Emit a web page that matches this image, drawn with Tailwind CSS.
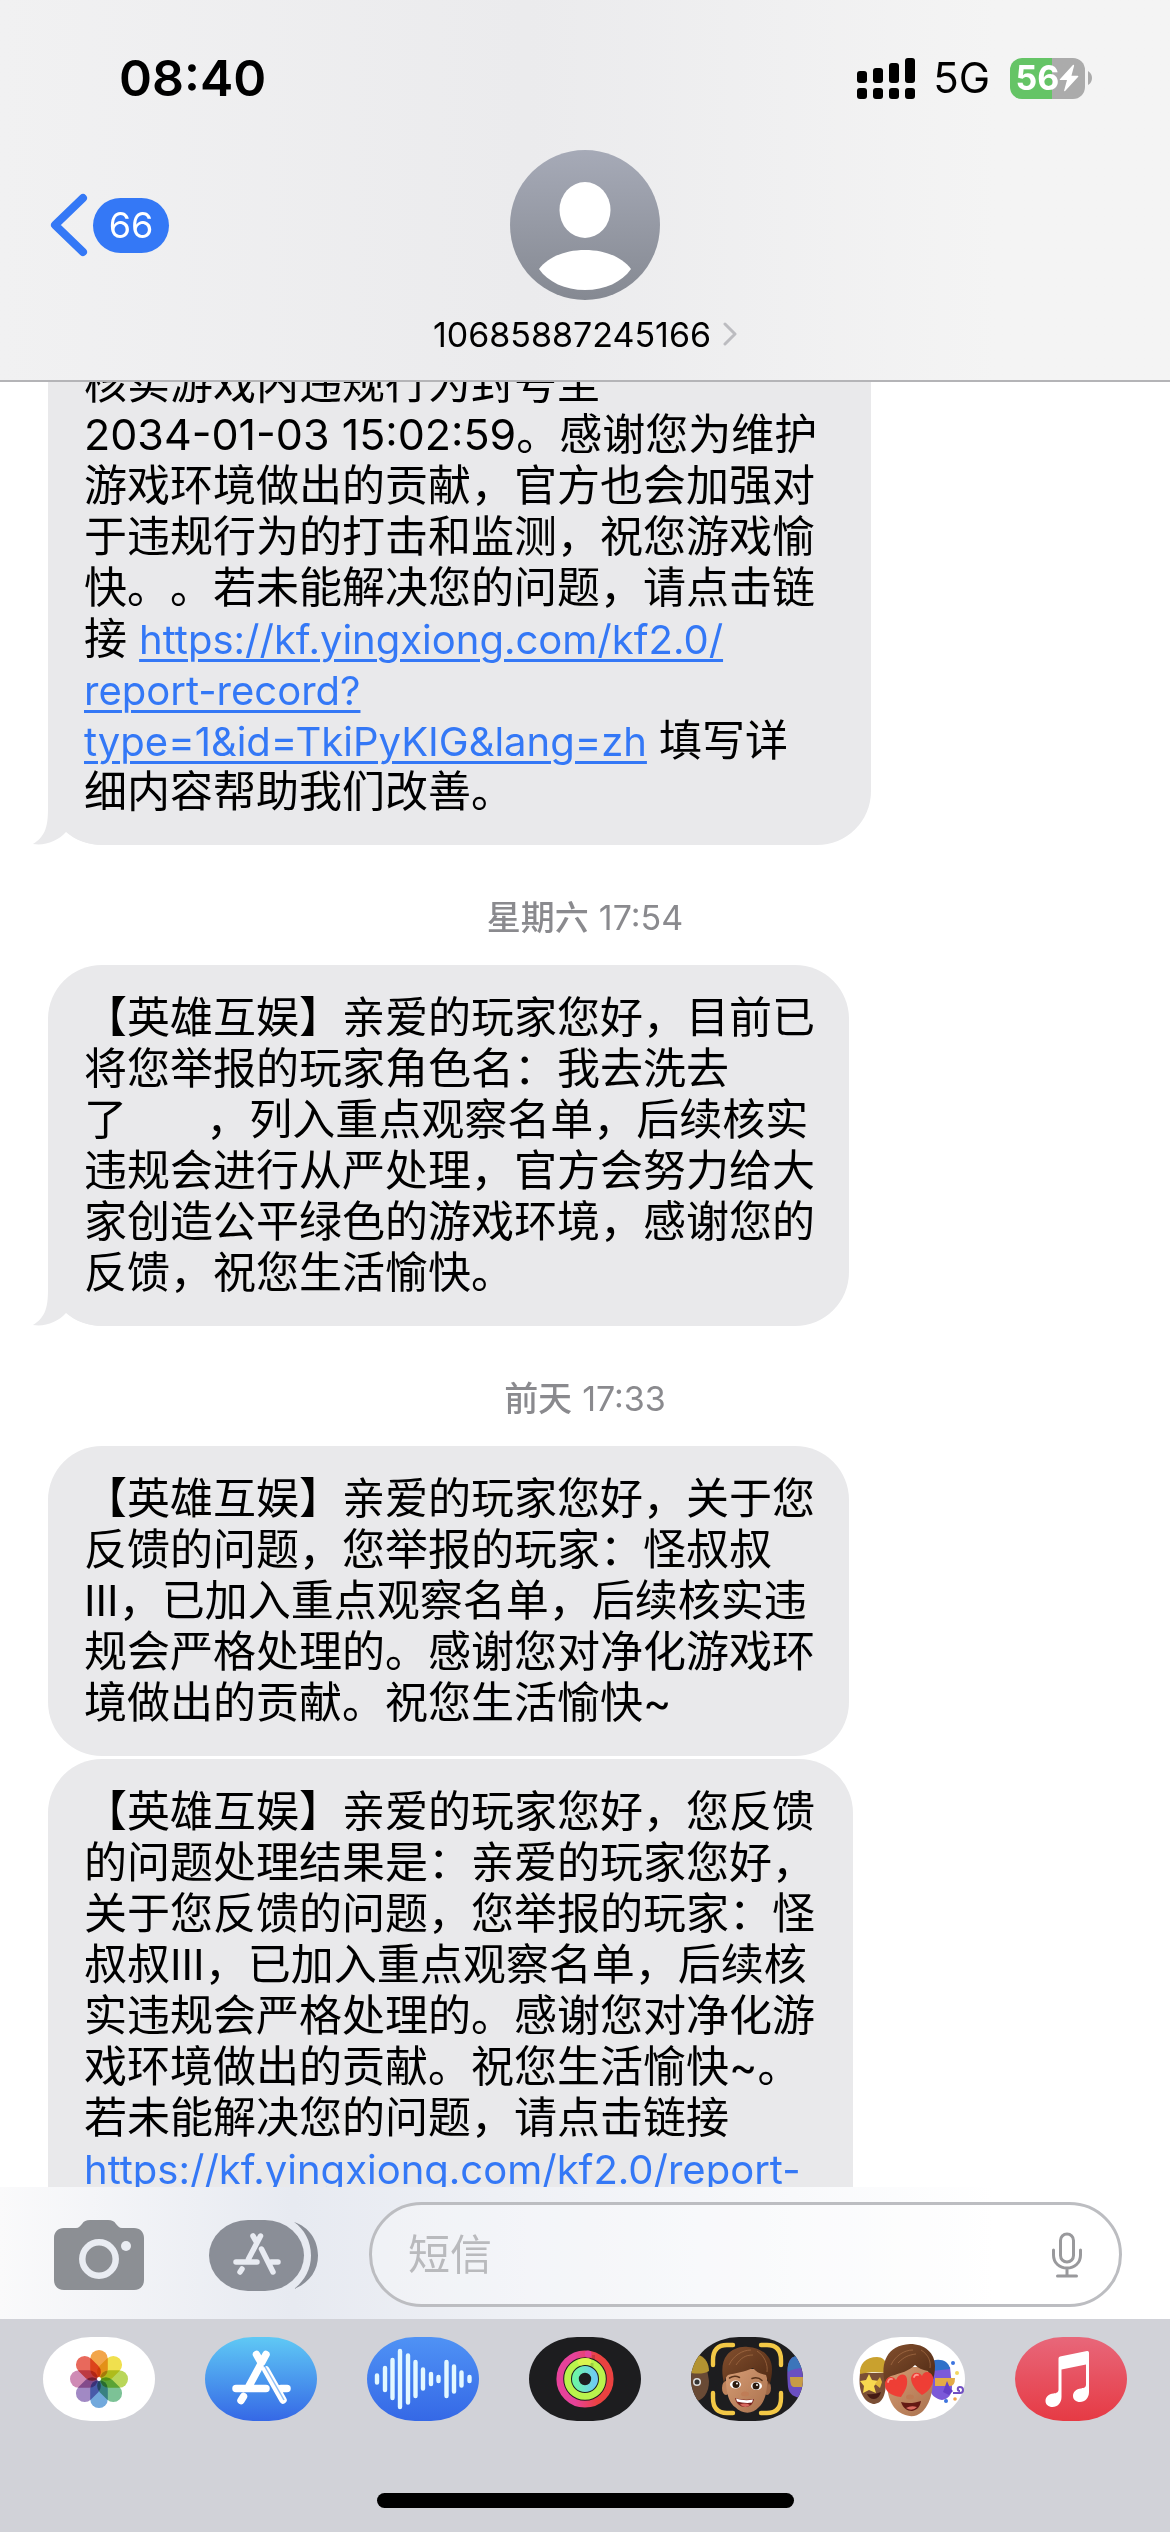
<!DOCTYPE html>
<html lang="zh-CN">

<head>
  <meta charset="UTF-8" />
  <meta name="viewport" content="width=device-width, initial-scale=1.0" />
  <title>短信 - 10685887245166</title>
  <script src="https://cdn.jsdelivr.net/npm/@tailwindcss/browser@4"></script>
</head>

<body class="h-screen flex flex-col overflow-hidden bg-white text-black font-[Inter,'Noto_Sans_CJK_SC',sans-serif] [text-spacing-trim:space-all]">

  <header class="shrink-0 border-b-2 border-[#b4b4b7] bg-linear-to-r from-[#f1f1f2] via-[#ebebed] via-45% to-[#f4f4f4] to-85%">
    <!-- Status bar -->
    <div class="h-[150px] pt-1.5 pl-[119px] pr-[78px] flex items-center justify-between">
      <span class="text-[50px] leading-none font-semibold">08:40</span>
      <div class="flex items-center">
        <svg class="w-[58px] h-[41px]" viewBox="0 0 58 41">
          <rect x="0" y="13" width="10" height="12" rx="3" />
          <rect x="16" y="10" width="10" height="15" rx="3" />
          <rect x="32" y="5" width="10" height="20" rx="3" />
          <rect x="48" y="0" width="10" height="25" rx="3" />
          <rect x="0" y="30" width="10" height="11" rx="3" />
          <rect x="16" y="30" width="10" height="11" rx="3" />
          <rect x="32" y="30" width="10" height="11" rx="3" />
          <rect x="48" y="30" width="10" height="11" rx="3" />
        </svg>
        <span class="ml-[18px] mr-5 text-[42px] leading-none">5G</span>
        <div class="w-[75px] h-[41px] rounded-xl bg-linear-to-r from-[#65c466] from-56% to-[#ababab] to-56% flex items-center justify-center text-white">
          <span class="text-[34px] leading-none font-bold">56</span>
          <svg class="w-5 h-7" viewBox="0 0 18 28" preserveAspectRatio="none">
            <path d="M12.500 1L.8 15.200q-.5.9.6.9h5.800L4.600 26.500q-.1 1.100.9.6L17.300 12.700q.5-.9-.6-.9h-5.500L13.600 1.700Q13.600.2 12.500 1z" fill="#fff" />
          </svg>
        </div>
        <svg class="ml-[3px] w-1 h-3.5" viewBox="0 0 4 14"><path d="M0 0q4 2.500 4 7t-4 7z" fill="#ababab" /></svg>
      </div>
    </div>

    <!-- Contact -->
    <div class="grid grid-cols-3 items-start pb-[22px]">
      <a href="#" class="h-[150px] pl-12 flex items-center gap-1">
        <svg class="w-[41px] h-[64px]" viewBox="0 0 41 64" fill="none" stroke="#3478f6" stroke-width="8" stroke-linecap="round" stroke-linejoin="round"><path d="M35 5L7 32l28 27" /></svg>
        <span class="w-[76px] h-[55px] rounded-full bg-[#3478f6] text-white text-[36px] flex items-center justify-center">66</span>
      </a>
      <button class="flex flex-col items-center">
        <svg class="w-[150px] h-[150px]" viewBox="0 0 150 150">
          <defs>
            <linearGradient id="avatar" x1="0" y1="0" x2="0" y2="1"><stop offset="0" stop-color="#a6aab7" /><stop offset="1" stop-color="#858992" /></linearGradient>
          </defs>
          <circle cx="75" cy="75" r="75" fill="url(#avatar)" />
          <ellipse cx="75" cy="60" rx="25.500" ry="28" fill="#fff" />
          <path d="M29 119C38 107 55 100 75 100s37 7 46 19c-9 13-26 21-46 21s-37-8-46-21z" fill="#fff" />
        </svg>
        <span class="mt-2.5 h-12 flex items-center gap-3 text-[34px] whitespace-nowrap">10685887245166
          <svg class="w-3.5 h-6" viewBox="0 0 14 24" fill="none" stroke="#bcbcc0" stroke-width="3" stroke-linecap="round" stroke-linejoin="round"><path d="M2 2l10 10L2 22" /></svg>
        </span>
      </button>
    </div>
  </header>

  <!-- Messages -->
  <main class="flex-1 min-h-0 overflow-hidden pl-12 text-[43px] leading-[51px] whitespace-nowrap">
    <div class="relative -mt-6 w-[823px] pl-9 pb-7 rounded-b-[54px] bg-[#e9e9eb]">
      <svg class="absolute bottom-0 -left-4 w-[72px] h-[54px]" viewBox="0 0 72 54"><path d="M16 0v18c0 20-4 28-15 35 12 2 25-3 33-12 9 8 22 13 38 13V0z" fill="#e9e9eb" /></svg>
      <p class="relative">核实游戏内违规行为封号至<br>2034-01-03 15:02:59。感谢您为维护<br>游戏环境做出的贡献，官方也会加强对<br>于违规行为的打击和监测，祝您游戏愉<br>快。。若未能解决您的问题，请点击链<br>接 <a href="#" class="text-[40px] leading-none text-[#3478f6] underline decoration-3 underline-offset-5">https://kf.yingxiong.com/kf2.0/<br>report-record?<br>type=1&amp;id=TkiPyKIG&amp;lang=zh</a> 填写详<br>细内容帮助我们改善。</p>
    </div>

    <p class="h-[120px] pt-6 pr-12 flex items-center justify-center gap-2.5 text-[34px] text-[#8a8a8e]"><b class="font-medium">星期六</b>17:54</p>

    <div class="relative w-[801px] pl-9 pt-[27px] pb-7 rounded-[54px] bg-[#e9e9eb]">
      <svg class="absolute bottom-0 -left-4 w-[72px] h-[54px]" viewBox="0 0 72 54"><path d="M16 0v18c0 20-4 28-15 35 12 2 25-3 33-12 9 8 22 13 38 13V0z" fill="#e9e9eb" /></svg>
      <p class="relative">【英雄互娱】亲爱的玩家您好，目前已<br>将您举报的玩家角色名：我去洗去<br>了　&nbsp;&nbsp;&nbsp;，列入重点观察名单，后续核实<br>违规会进行从严处理，官方会努力给大<br>家创造公平绿色的游戏环境，感谢您的<br>反馈，祝您生活愉快。</p>
    </div>

    <p class="h-[120px] pt-6 pr-12 flex items-center justify-center gap-2.5 text-[34px] text-[#8a8a8e]"><b class="font-medium">前天</b>17:33</p>

    <div class="w-[801px] pl-9 pt-[27px] pb-7 rounded-[54px] bg-[#e9e9eb]">
      <p>【英雄互娱】亲爱的玩家您好，关于您<br>反馈的问题，您举报的玩家：怪叔叔<br>III，已加入重点观察名单，后续核实违<br>规会严格处理的。感谢您对净化游戏环<br>境做出的贡献。祝您生活愉快~</p>
    </div>

    <div class="mt-[3px] w-[805px] pl-9 pt-[27px] pb-7 rounded-t-[54px] bg-[#e9e9eb]">
      <p>【英雄互娱】亲爱的玩家您好，您反馈<br>的问题处理结果是：亲爱的玩家您好，<br>关于您反馈的问题，您举报的玩家：怪<br>叔叔III，已加入重点观察名单，后续核<br>实违规会严格处理的。感谢您对净化游<br>戏环境做出的贡献。祝您生活愉快~。<br>若未能解决您的问题，请点击链接<br><a href="#" class="text-[40px] leading-none text-[#3478f6] underline decoration-3 underline-offset-5">https://kf.yingxiong.com/kf2.0/report-</a></p>
    </div>
  </main>

  <!-- Compose bar -->
  <form class="shrink-0 h-[132px] pt-[15px] pl-[54px] pr-12 flex items-start bg-linear-to-r from-[#fafafb] via-[#e7eaf1] via-25% to-white to-85%">
    <button type="button" aria-label="相机" class="mt-[18px]">
      <svg class="w-[90px] h-[70px]" viewBox="0 0 90 70">
        <path d="M10 8h12c3 0 4-2 6-4 2-3 4-4 8-4h18c4 0 6 1 8 4 2 2 3 4 6 4h12c6 0 10 4 10 10v42c0 6-4 10-10 10H10C4 70 0 66 0 60V18C0 12 4 8 10 8z" fill="#8c8f94" />
        <circle cx="45" cy="39" r="16.700" fill="none" stroke="#e9ecf2" stroke-width="6.500" />
        <circle cx="72" cy="26" r="5" fill="#e9ecf2" />
      </svg>
    </button>
    <button type="button" aria-label="App" class="mt-[18px] ml-[65px]">
      <svg class="w-[110px] h-[71px]" viewBox="0 0 110 71">
        <rect width="95" height="71" rx="39" ry="35.500" fill="#8a8e97" />
        <path d="M85 2c15 5 24 18 24 33.500S100 63 85 69c10-8 17-19 17-33.500S95 9 85 2z" fill="#8a8e97" />
        <path d="M51.500 16L39.500 39M44 16l3.500 6M52.500 29L64 52M27 42h21M62 42h7M33 49l-2 3" fill="none" stroke="#e8ebf2" stroke-width="5.500" stroke-linecap="round" />
      </svg>
    </button>
    <div class="ml-[50px] flex-1 min-w-0 h-[105px] border-3 border-[#bcbdc1] rounded-full bg-white/30 pl-9 pr-9 flex items-center">
      <input type="text" aria-label="短信" placeholder="短信" class="flex-1 min-w-0 bg-transparent text-[42px] outline-none placeholder:text-[#b9babd]" />
      <button type="button" aria-label="语音输入" class="shrink-0">
        <svg class="w-8 h-[46px]" viewBox="0 0 32 46" fill="none" stroke="#99999c" stroke-width="3" stroke-linecap="round" stroke-linejoin="round">
          <rect x="9.500" y="2" width="13" height="28" rx="6.500" />
          <path d="M2.500 18v5c0 8 6 13 13.500 13s13.500-5 13.500-13v-5M16 36v8M6.500 44h19" />
        </svg>
      </button>
    </div>
  </form>

  <!-- App strip -->
  <footer class="shrink-0 h-[213px] pt-[18px] pb-6 bg-[#d1d2d8] flex flex-col justify-between items-center">
    <nav class="w-full px-[43px] flex justify-between">
      <button aria-label="照片">
        <svg class="w-[112px] h-[84px]" viewBox="0 0 112 84">
          <rect width="112" height="84" rx="48" ry="42" fill="#fff" />
          <g class="isolate" transform="translate(56 42)">
            <rect class="mix-blend-multiply" x="-8.800" y="-29" width="17.600" height="28" rx="8.800" fill="#f2a54a" />
            <rect class="mix-blend-multiply" x="-8.800" y="-29" width="17.600" height="28" rx="8.800" fill="#f0e04e" transform="rotate(45)" />
            <rect class="mix-blend-multiply" x="-8.800" y="-29" width="17.600" height="28" rx="8.800" fill="#b9d65a" transform="rotate(90)" />
            <rect class="mix-blend-multiply" x="-8.800" y="-29" width="17.600" height="28" rx="8.800" fill="#7cc296" transform="rotate(135)" />
            <rect class="mix-blend-multiply" x="-8.800" y="-29" width="17.600" height="28" rx="8.800" fill="#72a9dc" transform="rotate(180)" />
            <rect class="mix-blend-multiply" x="-8.800" y="-29" width="17.600" height="28" rx="8.800" fill="#a189c4" transform="rotate(225)" />
            <rect class="mix-blend-multiply" x="-8.800" y="-29" width="17.600" height="28" rx="8.800" fill="#cf8bb5" transform="rotate(270)" />
            <rect class="mix-blend-multiply" x="-8.800" y="-29" width="17.600" height="28" rx="8.800" fill="#e8695c" transform="rotate(315)" />
            <circle r="2" fill="#fff" />
          </g>
        </svg>
      </button>
      <button aria-label="App Store">
        <svg class="w-[112px] h-[84px]" viewBox="0 0 112 84">
          <defs><linearGradient id="store" x1="0" y1="0" x2="0" y2="1"><stop offset="0" stop-color="#5fc9f5" /><stop offset="1" stop-color="#3568e6" /></linearGradient></defs>
          <rect width="112" height="84" rx="48" ry="42" fill="url(#store)" />
          <path d="M61 17.500L43.500 50M51.500 17.500l4 7M61 33l17 30M31 51.500h30M76 51.500h6M38.500 59.500l-2.500 4" fill="none" stroke="#fff" stroke-width="7.500" stroke-linecap="round" />
          <path d="M59 28l20 35" stroke="#4593ee" stroke-width="1.500" fill="none" opacity=".6" />
        </svg>
      </button>
      <button aria-label="音频">
        <svg class="w-[112px] h-[84px]" viewBox="0 0 112 84">
          <defs><linearGradient id="audio" x1="0" y1="0" x2="0" y2="1"><stop offset="0" stop-color="#4f92f5" /><stop offset="1" stop-color="#3568e6" /></linearGradient></defs>
          <rect width="112" height="84" rx="48" ry="42" fill="url(#audio)" />
          <path d="M10 38.500v7M18 31v22M25.500 23v38M33 14v56M41 18.500v47M48.500 25v34M56 32.500v19M64 37v10M71.500 40v4M79.500 25v34M87 29.500v25M94.500 35.500v13M102.500 40v4" stroke="#e3f8ff" stroke-width="4.400" stroke-linecap="round" />
        </svg>
      </button>
      <button aria-label="健身">
        <svg class="w-[112px] h-[84px]" viewBox="0 0 112 84">
          <defs>
            <linearGradient id="move" x1="0" x2="1"><stop offset=".3" stop-color="#e6429a" /><stop offset=".75" stop-color="#ea4240" /></linearGradient>
            <linearGradient id="stand" x1="0" x2="1"><stop offset="0" stop-color="#6df5a6" /><stop offset="1" stop-color="#6fcdf2" /></linearGradient>
          </defs>
          <rect width="112" height="84" rx="48" ry="42" fill="#1d1d1f" />
          <g fill="none" stroke-width="6.800">
            <circle cx="56" cy="42" r="25.200" stroke="url(#move)" />
            <circle cx="56" cy="42" r="17.400" stroke="#b9f34c" />
            <circle cx="56" cy="42" r="9.600" stroke="url(#stand)" />
            <path d="M59 17v.1" stroke="#e6429a" stroke-linecap="round" />
            <path d="M52 25q3-1 7-.5" stroke="#dcf54f" stroke-linecap="round" />
            <path d="M64.500 18v5M63 26v4" stroke="#000" stroke-opacity=".15" stroke-width="3" />
          </g>
        </svg>
      </button>
      <button aria-label="拟我表情">
        <svg class="w-[112px] h-[84px]" viewBox="0 0 112 84">
          <defs>
            <clipPath id="pill"><rect width="112" height="84" rx="48" ry="42" /></clipPath>
            <linearGradient id="skin" x1="0" y1="0" x2="1" y2="1"><stop offset="0" stop-color="#d69c74" /><stop offset="1" stop-color="#a9714d" /></linearGradient>
            <linearGradient id="hair" x1="0" y1="0" x2="1" y2="1"><stop offset="0" stop-color="#84502e" /><stop offset="1" stop-color="#4e2914" /></linearGradient>
          </defs>
          <g clip-path="url(#pill)">
            <rect width="112" height="84" fill="#1d1d1f" />
            <!-- left and right neighbours -->
            <path d="M0 32h16l2 12c0 12-6 20-14 20H0z" fill="#694a35" />
            <path d="M0 36V22l8-4c7 3 10 9 10 16-5 3-11 3-18 2z" fill="#b39331" />
            <circle cx="6" cy="45" r="4" fill="#ddd" /><circle cx="6" cy="45" r="2.500" fill="#333" />
            <path d="M112 20h-10c-7 4-6 18-5 30 1 7 6 11 15 11z" fill="#6a4fc0" />
            <path d="M112 19h-8c-6 3-8 9-7 16 5-3 9-4 15-4z" fill="#3c75ba" />
            <path d="M99 40h13v10h-9c-3 0-4-4-4-10z" fill="#c79c45" />
            <!-- face -->
            <ellipse cx="35" cy="51" rx="4" ry="7" fill="#bd835d" /><ellipse cx="76" cy="51" rx="4" ry="7" fill="#a06947" />
            <path d="M35 32c-1 24 3 33 9 38 7 7 17 8 24 0 7-7 9-17 8-38z" fill="url(#skin)" />
            <path d="M33 46c-3-12-2-22 3-28 5-6 13-9 21-8 15 1 24 10 24 22 0 6-1 12-3 16l-3-10c-6-1-10-3-13-7-8 4-18 5-25 7-2 2-3 4-4 8z" fill="url(#hair)" />
            <path d="M38 28c4-9 13-15 22-15M45 28c5-7 9-10 17-10M66 14c8 5 11 14 10 21" fill="none" stroke="#b0764c" stroke-width="1" opacity=".6" />
            <ellipse cx="44.500" cy="47.500" rx="5.500" ry="4" fill="#fff" /><ellipse cx="65.500" cy="49" rx="5.500" ry="4" fill="#fff" />
            <circle cx="45" cy="47.500" r="3.500" fill="#2b190d" /><circle cx="65" cy="49" r="3.500" fill="#2b190d" />
            <circle cx="46" cy="46.500" r="1" fill="#fff" /><circle cx="66" cy="48" r="1" fill="#fff" />
            <path d="M38.500 41q5-3 10-.5M61 41.500q6-2 10 2" fill="none" stroke="#5a331b" stroke-width="1.500" stroke-linecap="round" />
            <ellipse cx="54" cy="57" rx="4" ry="2.500" fill="#bf7d57" />
            <path d="M44 61c6 2 13 2 19 1-1 6-5 8-9 8s-9-3-10-9z" fill="#7c231e" />
            <path d="M45 61.500c6 2 12 2 17 1l-1 3c-5 1-11 0-15-1z" fill="#fff" />
            <path d="M49 67.500q5-2 10 .5-5 4-10-.5z" fill="#d7695f" />
          </g>
          <path d="M22 28v-5q0-15 14-15h6M70 8h6q14 0 14 15v5M22 56v5q0 15 14 15h6M70 76h6q14 0 14-15v-5" fill="none" stroke="#f3c846" stroke-width="4.400" stroke-linecap="round" />
        </svg>
      </button>
      <button aria-label="拟我表情贴纸">
        <svg class="w-[112px] h-[84px]" viewBox="0 0 112 84">
          <rect width="112" height="84" rx="48" ry="42" fill="#fff" />
          <!-- yellow beanie -->
          <path d="M7 36c-2 16 2 28 13 31 9 0 14-8 13-31z" fill="#7b4f35" />
          <path d="M7 37c-1-10 6-17 17-17 5 0 9 3 9 8v8c-9-1-17-1-26 1z" fill="#c9a12e" />
          <path d="M16 37l3 6 7 1-5 5 2 7-7-3-6 3 1-7-4-5 6-1z" fill="#f7d84f" /><path d="M27 40l2 5-2 6-5-4z" fill="#e3b93b" />
          <path d="M14 57q7 1 14-2-2 7-7 7t-7-5z" fill="#451b13" />
          <!-- purple party face -->
          <path d="M79 30h18l2 20c0 8-4 12-10 13-7-1-12-6-12-12z" fill="#7b59d8" />
          <path d="M79 24c8-3 17 0 18 8l-18 2z" fill="#3071c9" />
          <path d="M82 41h20q0 9-6 8H82z" fill="#e3ab47" />
          <path d="M94 44l3 7 3 3-4 4-6-3z" fill="#6541c7" />
          <path d="M100 56h7c4 0 4-6 0-6-3 0-3 4 0 4" fill="none" stroke="#714fc2" stroke-width="2" />
          <circle cx="100" cy="26" r="2" fill="#3d74df" /><circle cx="104" cy="36" r="2" fill="#f3d660" /><circle cx="93" cy="64" r="2" fill="#3d74df" /><circle cx="102" cy="62" r="1.800" fill="#f0a04a" />
          <!-- heart eyes -->
          <path d="M33 30c0 28 4 38 13 45 8 5 16 6 23 0 8-8 12-20 11-45z" fill="url(#skin)" />
          <path d="M32 46c-5-20 2-38 25-39 15 0 25 9 25 22 0 6-1 12-3 16l-4-11c-6-1-10-3-13-6-6 6-14 8-24 11-3 1-4 3-6 7z" fill="url(#hair)" />
          <path d="M38 28c4-9 13-15 22-15M45 26c6-6 10-8 18-9M68 13c8 5 10 12 9 18" fill="none" stroke="#b0764c" stroke-width="1" opacity=".6" />
          <path d="M48 60c-10-1-17-6-16-14 1-7 8-8 11-3 3-7 10-7 11-1 1 7-2 12-6 18z" fill="#ee3e35" />
          <path d="M69 58c-6-4-11-11-11-17 1-6 8-7 11-2 2-6 9-5 11 1 1 8-4 14-11 18z" fill="#ee3e35" />
          <path d="M35 45q1-4 4-3M61 40q1-3 4-2" fill="none" stroke="#ff9c90" stroke-width="1.800" stroke-linecap="round" />
          <ellipse cx="57" cy="60" rx="4" ry="2.500" fill="#bd7b55" />
          <path d="M48 65c7 2 14 1 20-1-1 6-4 9-9 10-5 0-9-3-11-9z" fill="#641914" />
          <path d="M53 71q5-3 11-1-5 5-11 1z" fill="#dc6a60" />
        </svg>
      </button>
      <button aria-label="音乐">
        <svg class="w-[112px] h-[84px]" viewBox="0 0 112 84">
          <defs><linearGradient id="music" x1="0" y1="0" x2="0" y2="1"><stop offset="0" stop-color="#e8677a" /><stop offset="1" stop-color="#e63a44" /></linearGradient></defs>
          <rect width="112" height="84" rx="48" ry="42" fill="url(#music)" />
          <path d="M45 19.500L72 14q2-.3 2 1.700V55c0 6-4 10-9 10-4 0-7-2.500-7-6 0-4 3-7 8-7.500 3-.4 5-1 5-4V27.500L46.500 32.500V60c0 6-4 10-9 10-4 0-7-2.500-7-6 0-4 3-7 8-7.500 3-.4 5-1 5-4V21.500q0-1.700 1.500-2z" fill="#fff" />
        </svg>
      </button>
    </nav>
    <div class="w-[417px] h-[15px] rounded-full bg-black"></div>
  </footer>

</body>

</html>
